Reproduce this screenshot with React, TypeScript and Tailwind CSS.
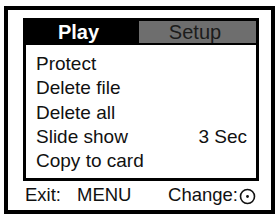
export default function App() {
  const items: { label: string; value?: string }[] = [
    { label: 'Protect' },
    { label: 'Delete file' },
    { label: 'Delete all' },
    { label: 'Slide show', value: '3 Sec' },
    { label: 'Copy to card' },
  ]

  return (
    <div className="h-[218px] w-[278px] bg-white pl-[4px] pt-[6px] font-['Liberation_Sans',Arial,sans-serif] text-[#111]">
      <div className="flex h-[208px] w-[271px] flex-col border-[4px] border-black pl-[15px] pt-[8px]">
        {/* Menu box */}
        <div className="flex h-[163px] w-[236px] flex-col border-[3px] border-black">
          {/* Tabs */}
          <div className="flex h-[24px] border-b-2 border-black">
            <div className="flex w-[113px] items-center justify-center bg-black pr-[8px] text-[20px] font-bold leading-none text-white">
              Play
            </div>
            <div className="flex flex-1 items-center justify-center bg-[#6e6e6e] pr-[5px] text-[20px] leading-none text-[#1c1c1c]">
              Setup
            </div>
          </div>

          {/* Items */}
          <div className="flex flex-col pl-[10px] pr-[9px] pt-[7px] text-[19px] leading-[24.25px]">
            {items.map((item) => (
              <div key={item.label} className="flex justify-between">
                <span>{item.label}</span>
                {item.value && <span>{item.value}</span>}
              </div>
            ))}
          </div>
        </div>

        {/* Footer */}
        <div className="mt-[4px] flex w-[236px] items-center pl-[2px] pr-[3px] text-[18.5px] leading-[20px]">
          <span>Exit:</span>
          <span className="ml-[16px]">MENU</span>
          <span className="ml-auto flex items-center">
            Change:
            <svg width="17" height="17" viewBox="0 0 17 17" className="ml-[1px] mt-[3px]">
              <circle cx="8.5" cy="8.5" r="7" fill="none" stroke="#111" strokeWidth="1.6" />
              <circle cx="8.5" cy="8.5" r="1.4" fill="#111" />
            </svg>
          </span>
        </div>
      </div>
    </div>
  )
}
